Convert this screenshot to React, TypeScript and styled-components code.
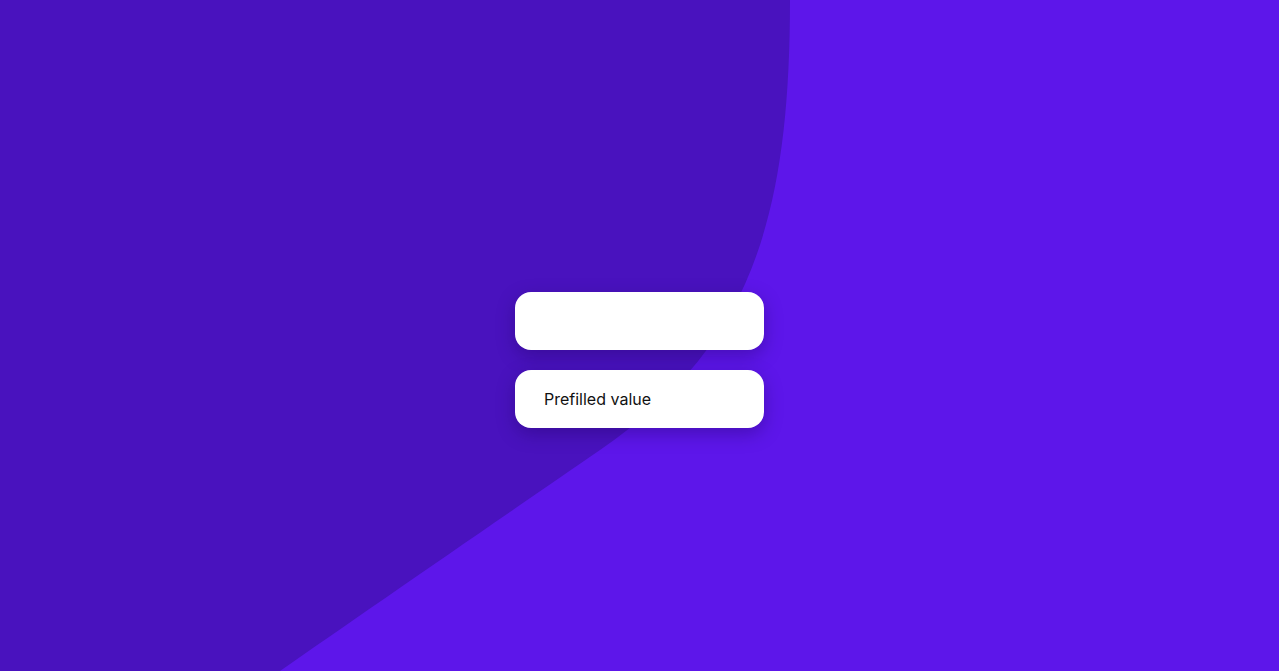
import styled, { createGlobalStyle } from "styled-components";

const GlobalStyle = createGlobalStyle`
  html, body {
    margin: 0;
    padding: 0;
    height: 100%;
    overflow: hidden;
  }
  body {
    background: #5d16ea;
    font-family: Inter, "Liberation Sans", sans-serif;
  }
`;

const Page = styled.main`
  position: relative;
  width: 100vw;
  height: 100vh;
  background: #5d16ea;
  overflow: hidden;
`;

const Wave = styled.svg`
  position: absolute;
  inset: 0;
  width: 100%;
  height: 100%;
`;

const Form = styled.form`
  position: relative;
  height: 100%;
  box-sizing: border-box;
  padding-top: 49px;
  display: flex;
  flex-direction: column;
  align-items: center;
  justify-content: center;
  gap: 20px;
`;

const Field = styled.input`
  width: 249px;
  height: 58px;
  box-sizing: border-box;
  border: none;
  outline: none;
  border-radius: 16px;
  background: #fff;
  padding: 0 20px 0 29px;
  font-family: Inter, "Liberation Sans", sans-serif;
  font-size: 16px;
  color: #111;
  box-shadow: 0 6px 18px rgba(30, 0, 90, 0.35);
`;

export default function App() {
  return (
    <Page>
      <GlobalStyle />
      <Wave viewBox="0 0 1279 671" preserveAspectRatio="none">
        <path
          d="M0 0 H790 C790 230 745 350 600 450 C520 505 360 615 280 671 H0 Z"
          fill="#4912be"
        />
      </Wave>
      <Form onSubmit={(e) => e.preventDefault()}>
        <Field type="text" aria-label="Empty field" />
        <Field type="text" aria-label="Prefilled field" defaultValue="Prefilled value" />
      </Form>
    </Page>
  );
}
